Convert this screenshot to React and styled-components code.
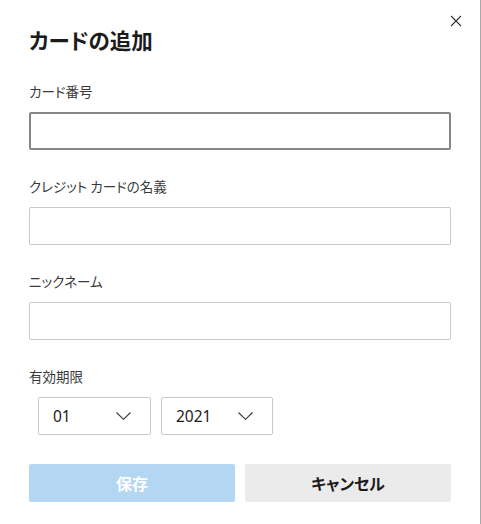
import React from "react";
import styled, { createGlobalStyle } from "styled-components";

const Global = createGlobalStyle`
  html, body { margin: 0; padding: 0; background: #fff; }
  body {
    font-family: "Noto Sans CJK JP", "Noto Sans", sans-serif;
    font-feature-settings: "palt" 1;
  }
  * { box-sizing: border-box; }
`;

const Dialog = styled.div`
  position: relative;
  width: 481px;
  height: 524px;
  background: #fff;
  border-right: 1px solid #a8a8a8;
  padding: 25px 29px 0 29px;
  display: flex;
  flex-direction: column;
`;

const Close = styled.button`
  position: absolute;
  top: 13px;
  right: 16px;
  width: 16px;
  height: 16px;
  padding: 0;
  border: none;
  background: transparent;
  display: flex;
  align-items: center;
  justify-content: center;
`;

const Title = styled.h1`
  margin: 0;
  font-size: 21.5px;
  line-height: 30px;
  font-weight: 700;
  color: #1b1b1b;
  font-feature-settings: "palt" 1;
`;

const Field = styled.div`
  display: flex;
  flex-direction: column;
  margin-top: ${(p) => p.$top}px;
`;

const Label = styled.label`
  font-size: 13.5px;
  line-height: 20px;
  color: #3a3a3a;
  margin-bottom: 11px;
  font-feature-settings: "palt" 1;
`;

const Input = styled.input`
  width: 422px;
  height: 38px;
  border: ${(p) => (p.$focused ? "2px solid #868686" : "1px solid #c8c8c8")};
  border-radius: 2px;
  background: #fff;
  outline: none;
  font-size: 15px;
  padding: 0 10px;
`;

const SelectRow = styled.div`
  display: flex;
  gap: 10px;
  padding-left: 9px;
`;

const Select = styled.div`
  width: ${(p) => p.$w}px;
  height: 38px;
  border: 1px solid #c8c8c8;
  border-radius: 2px;
  display: flex;
  align-items: center;
  justify-content: space-between;
  padding: 0 19px 0 14px;
  font-family: "Segoe UI", "Noto Sans", sans-serif;
  font-size: 15.5px;
  color: #1b1b1b;
`;

const Buttons = styled.div`
  display: flex;
  gap: 10px;
  margin-top: 29px;
`;

const Button = styled.button`
  width: 206px;
  height: 38px;
  border: none;
  border-radius: 2px;
  font-family: "Noto Sans CJK JP", sans-serif;
  font-feature-settings: "palt" 1;
  font-size: 16px;
  font-weight: 700;
  background: ${(p) => (p.$primary ? "#b3d6f2" : "#ebebeb")};
  color: ${(p) => (p.$primary ? "#ffffff" : "#1b1b1b")};
`;

const Chevron = () => (
  <svg width="15" height="8" viewBox="0 0 15 8" fill="none">
    <path d="M0.5 0.5 L7.5 7.3 L14.5 0.5" stroke="#333" strokeWidth="1.1" />
  </svg>
);

export default function App() {
  return (
    <>
      <Global />
      <Dialog>
        <Close aria-label="閉じる">
          <svg width="12" height="12" viewBox="0 0 12 12">
            <path d="M1 1 L11 11 M11 1 L1 11" stroke="#333" strokeWidth="1.1" />
          </svg>
        </Close>
        <Title>カードの追加</Title>
        <Field $top={26}>
          <Label>カード番号</Label>
          <Input $focused />
        </Field>
        <Field $top={26}>
          <Label>クレジット カードの名義</Label>
          <Input />
        </Field>
        <Field $top={26}>
          <Label>ニックネーム</Label>
          <Input />
        </Field>
        <Field $top={26}>
          <Label>有効期限</Label>
          <SelectRow>
            <Select $w={113}>
              <span>01</span>
              <Chevron />
            </Select>
            <Select $w={112}>
              <span>2021</span>
              <Chevron />
            </Select>
          </SelectRow>
        </Field>
        <Buttons>
          <Button $primary>保存</Button>
          <Button>キャンセル</Button>
        </Buttons>
      </Dialog>
    </>
  );
}
